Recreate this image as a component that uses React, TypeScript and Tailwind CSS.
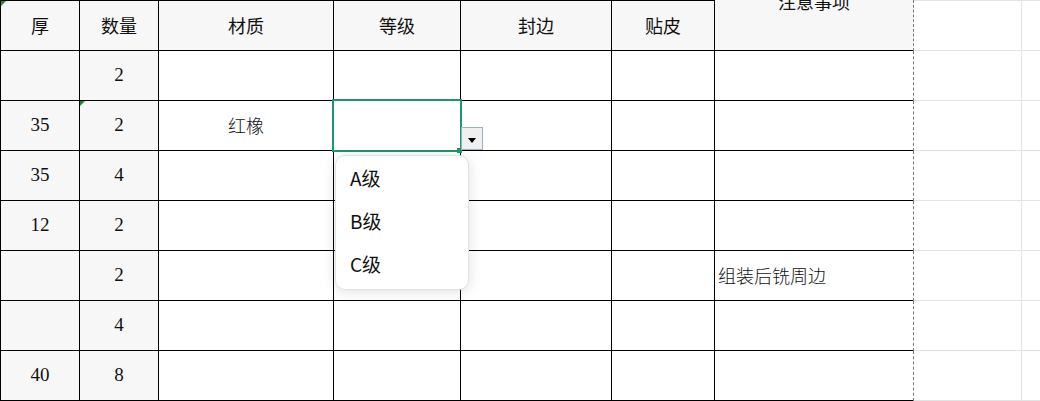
import React from "react";

const W = ["w-[80px] border-l", "w-[79px]", "w-[175px]", "w-[127px]", "w-[151px]", "w-[103px]", "w-[198px]"];

const rows: { a: string; b: string; c?: string; g?: string }[] = [
  { a: "", b: "2" },
  { a: "35", b: "2", c: "红橡" },
  { a: "35", b: "4" },
  { a: "12", b: "2" },
  { a: "", b: "2", g: "组装后铣周边" },
  { a: "", b: "4" },
  { a: "40", b: "8" },
];

const serif = "font-['Liberation_Serif','Noto_Sans_CJK_SC',serif]";
const sans = "font-['Noto_Sans_CJK_SC','Liberation_Sans',sans-serif]";

function Cell({ i, children, className = "" }: { i: number; children?: React.ReactNode; className?: string }) {
  const right = i === 6 ? "" : "border-r";
  return (
    <div className={`${W[i]} shrink-0 h-full border-b border-black ${right} flex items-center justify-center text-[18px] text-[#111] ${className}`}>
      {children}
    </div>
  );
}

function Dash() {
  return <div className="w-px shrink-0 h-full border-l border-dashed border-[#7a7a7a]" />;
}

function Extra({ header = false }: { header?: boolean }) {
  return (
    <>
      <div className={`w-[108px] shrink-0 h-full border-b border-r border-[#e3e3e3] ${header ? "border-t" : ""}`} />
      <div className={`flex-1 h-full border-b border-[#e3e3e3] ${header ? "border-t" : ""}`} />
    </>
  );
}

export default function App() {
  const heads = ["厚", "数量", "材质", "等级", "封边", "贴皮"];
  return (
    <div className="relative w-[1040px] h-[401px] overflow-hidden bg-white">
      <div className="flex flex-col">
        <div className="flex h-[51px]">
          {heads.map((h, i) => (
            <Cell key={i} i={i} className={`border-t bg-[#f7f7f7] ${sans}`}>
              {h}
            </Cell>
          ))}
          <div className={`w-[198px] shrink-0 h-full border-b border-black bg-[#f7f7f7] flex justify-center overflow-hidden text-[18px] text-[#111] ${sans}`}>
            <span className="leading-[18px] mt-[-8px]">注意事项</span>
          </div>
          <Dash />
          <Extra header />
        </div>
        {rows.map((r, k) => (
          <div key={k} className="flex h-[50px]">
            <Cell i={0} className={`bg-[#f7f7f7] ${serif} text-[19px]`}>{r.a}</Cell>
            <Cell i={1} className={`bg-[#f7f7f7] ${serif} text-[19px]`}>{r.b}</Cell>
            <Cell i={2} className={`${sans} font-light`}>{r.c}</Cell>
            <Cell i={3} />
            <Cell i={4} />
            <Cell i={5} />
            <Cell i={6} className={`justify-start pl-[3px] ${sans} font-light`}>{r.g}</Cell>
            <Dash />
            <Extra />
          </div>
        ))}
      </div>

      {/* comment indicators */}
      <div className="absolute left-[1px] top-[1px] w-0 h-0 border-t-[5px] border-r-[5px] border-t-[#1c8a2e] border-r-transparent" />
      <div className="absolute left-[80px] top-[101px] w-0 h-0 border-t-[5px] border-r-[5px] border-t-[#1c8a2e] border-r-transparent" />

      {/* selection */}
      <div className="absolute left-[332px] top-[99px] w-[130px] h-[53px] border-2 border-[#1b976c]" />
      <div className="absolute left-[457px] top-[148px] w-[5px] h-[5px] bg-[#1b976c]" />

      {/* dropdown button */}
      <div className="absolute left-[461px] top-[127px] w-[22px] h-[23px] bg-[#f0f0f0] border border-[#9cb0c6] flex items-end justify-center pb-[6px]">
        <div className="w-0 h-0 border-l-[4px] border-r-[4px] border-t-[5px] border-l-transparent border-r-transparent border-t-black" />
      </div>

      {/* dropdown list */}
      <div className={`absolute left-[335px] top-[155px] w-[134px] h-[135px] bg-white rounded-[10px] border border-[#e2e2e2] shadow-[0_2px_14px_rgba(0,0,0,0.12)] pt-[1px] ${sans}`}>
        {["A级", "B级", "C级"].map((t) => (
          <div key={t} className="h-[43px] flex items-center pl-[14px] text-[19px] text-[#111]">
            {t}
          </div>
        ))}
      </div>
    </div>
  );
}
